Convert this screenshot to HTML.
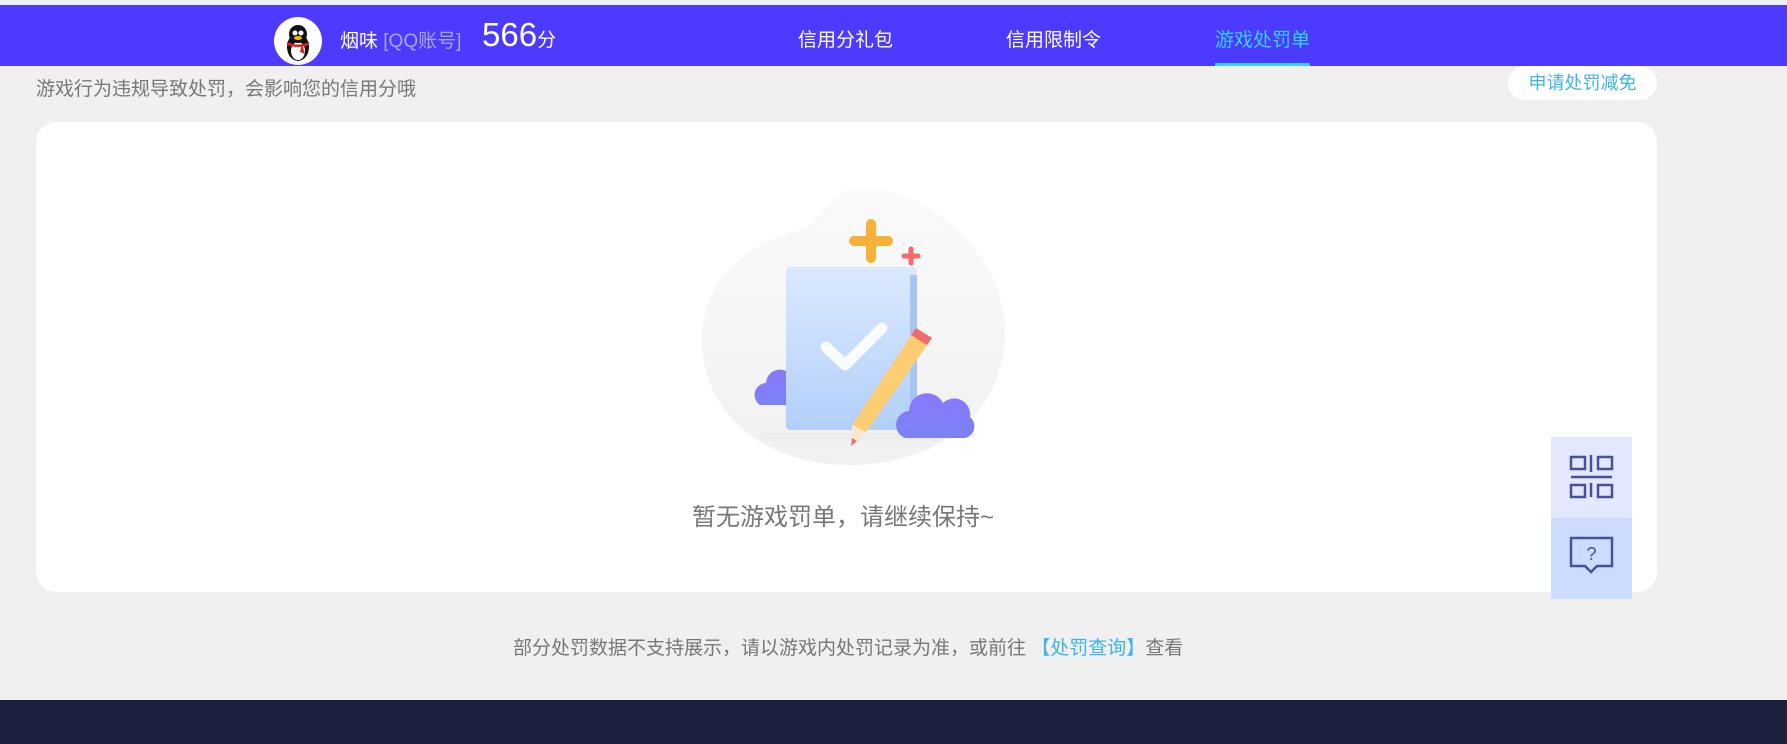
<!DOCTYPE html>
<html><head><meta charset="utf-8"><style>
*{margin:0;padding:0;box-sizing:border-box}
body{width:1787px;height:744px;background:#f0f0f0;font-family:"Liberation Sans","Noto Sans CJK SC",sans-serif;position:relative;overflow:hidden}
.top{position:absolute;left:0;top:0;width:1787px;height:5px;background:#eef2f4}
.hdr{position:absolute;left:0;top:5px;width:1787px;height:61px;background:#4c3aff}
.av{position:absolute;left:274px;top:12px;width:48px;height:48px;border-radius:50%;background:#fff;overflow:hidden}
.name{position:absolute;left:340px;top:21px;color:#fff;font-size:19px}
.name span{color:#a9a6ff}
.score{position:absolute;left:482px;top:11px;color:#fff;font-size:33px}
.score small{font-size:19px}
.nav{position:absolute;top:20px;color:#fff;font-size:19px}
.nav.on{color:#33d4ff}
.ul{position:absolute;left:1215px;top:63px;width:95px;height:3px;background:#33d4ff}
.sub{position:absolute;left:36px;top:74px;font-size:19px;color:#777}
.btn{position:absolute;left:1508px;top:66px;width:149px;height:34px;border-radius:17px;background:#fff;color:#3fb4e6;font-size:18px;text-align:center;line-height:34px}
.card{position:absolute;left:36px;top:122px;width:1621px;height:470px;background:#fff;border-radius:20px}
.empty{position:absolute;left:692px;top:497px;font-size:24px;color:#777;white-space:nowrap}
.note{position:absolute;left:513px;top:633px;font-size:19px;color:#777;white-space:nowrap}
.note span{color:#3fb4e6}
.side1{position:absolute;left:1551px;top:437px;width:81px;height:81px;background:#e2e9fe}
.side2{position:absolute;left:1551px;top:518px;width:81px;height:81px;background:#cddcfe}
.foot{position:absolute;left:0;top:700px;width:1787px;height:44px;background:#1e2040}
</style></head><body>
<div class="top"></div>
<div class="hdr">
<div class="av"><svg width="48" height="48" viewBox="0 0 48 48"><ellipse cx="24" cy="30" rx="11" ry="14" fill="#111"/><ellipse cx="24" cy="34" rx="7" ry="9" fill="#fff"/><circle cx="24" cy="17" r="9" fill="#111"/><circle cx="21" cy="16" r="2.5" fill="#fff"/><circle cx="27" cy="16" r="2.5" fill="#fff"/><ellipse cx="24" cy="21" rx="4" ry="2" fill="#f5b800"/><path d="M13 25 Q24 30 35 25 L35 28 Q24 32 13 28Z" fill="#e02020"/><path d="M28 27 L31 37 L26 35Z" fill="#e02020"/></svg></div>
<div class="name">烟味 <span>[QQ账号]</span></div>
<div class="score">566<small>分</small></div>
<div class="nav" style="left:798px">信用分礼包</div>
<div class="nav" style="left:1006px">信用限制令</div>
<div class="nav on" style="left:1215px">游戏处罚单</div>
</div>
<div class="ul"></div>
<div class="sub">游戏行为违规导致处罚，会影响您的信用分哦</div>
<div class="btn">申请处罚减免</div>
<div class="card"></div>
<svg style="position:absolute;left:690px;top:180px" width="330" height="300" viewBox="690 180 330 300">
<defs><linearGradient id="bl" x1="0" y1="0" x2="0" y2="1"><stop offset="0" stop-color="#fafafa"/><stop offset="1" stop-color="#f1f1f1"/></linearGradient>
<linearGradient id="fd" x1="0" y1="0" x2="0" y2="1"><stop offset="0" stop-color="#dbe9ff"/><stop offset="1" stop-color="#b2d0fb"/></linearGradient>
<linearGradient id="cl" x1="0" y1="0" x2="0" y2="1"><stop offset="0" stop-color="#8a78ff"/><stop offset="1" stop-color="#7a82f2"/></linearGradient></defs>
<path d="M850 190 C930 180 1005 260 1005 330 C1005 420 930 465 850 465 C760 465 702 410 702 340 C702 270 760 240 800 230 C820 225 830 193 850 190Z" fill="url(#bl)"/>
<rect x="760" y="433" width="180" height="8" rx="4" fill="#ececec"/>
<rect x="786" y="267" width="131" height="163" rx="4" fill="url(#fd)"/>
<rect x="910" y="275" width="7" height="155" fill="#a9c6f3"/>
<path d="M826 347 L845 365 L882 328" stroke="#fff" stroke-width="11" fill="none" stroke-linecap="round" stroke-linejoin="round" opacity=".9"/>
<path d="M916 328 L932 338 L866 432 L852 425Z" fill="#fccd72"/>
<path d="M916 328 L932 338 L927 345 L911 335Z" fill="#f26a6a"/>
<path d="M852 425 L866 432 L852 446Z" fill="#fbe9cf"/>
<path d="M852 438 L857 441 L851 446Z" fill="#f26a6a"/>
<path d="M871 224 v34 M854 241 h34" stroke="#f7b13b" stroke-width="10" stroke-linecap="round"/>
<path d="M911 249 v14 M904 256 h14" stroke="#f26a6a" stroke-width="5" stroke-linecap="round"/>
<path d="M760 405 a12 12 0 0 1 6 -22 a14 14 0 0 1 20 -12 v34Z" fill="url(#cl)"/>
<path d="M905 438 a14 14 0 0 1 4 -27 a18 18 0 0 1 34 -8 a16 16 0 0 1 27 14 a12 12 0 0 1 -5 21Z" fill="url(#cl)"/>
</svg>
<div class="empty">暂无游戏罚单，请继续保持~</div>
<div class="note">部分处罚数据不支持展示，请以游戏内处罚记录为准，或前往 <span>【处罚查询】</span>查看</div>
<div class="side1"><svg width="81" height="81" viewBox="0 0 81 81" fill="none" stroke="#4a4f9a" stroke-width="2.5"><rect x="20" y="20" width="14" height="12"/><rect x="47" y="20" width="14" height="12"/><rect x="20" y="48" width="14" height="12"/><rect x="47" y="48" width="14" height="12"/><path d="M40 18 v17 M20 40 h41 M40 46 v14"/></svg></div>
<div class="side2"><svg width="81" height="81" viewBox="0 0 81 81" fill="none" stroke="#4a4f9a" stroke-width="2.5"><path d="M20 20 h41 v28 h-15 l-6 6 l-6 -6 h-14Z"/><text x="40.5" y="42" font-size="18" fill="#4a4f9a" stroke="none" text-anchor="middle" font-family="Liberation Sans">?</text></svg></div>
<div class="foot"></div>
</body></html>
